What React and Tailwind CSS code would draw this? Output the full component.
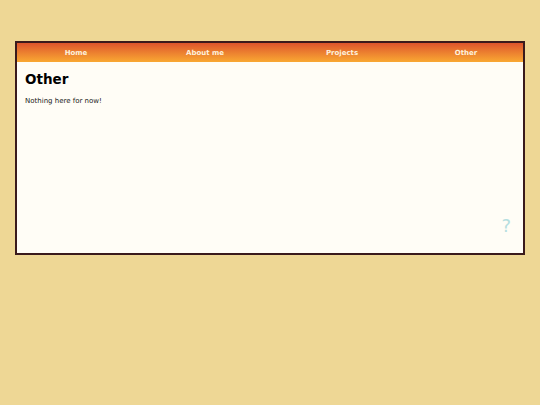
export default function App() {
  const items = [
    ['Home', 'w-[118px]'],
    ['About me', 'w-[140px]'],
    ['Projects', 'w-[134px]'],
    ['Other', 'w-[114px]'],
  ];
  return (
    <div className="min-h-[405px] w-full bg-[#eed795] pt-[41px] px-[15px] pb-[150px]" style={{ fontFamily: '"DejaVu Sans", Verdana, sans-serif' }}>
      <div className="w-[510px] h-[214px] border-2 border-[#3a1a1c] bg-[#fffdf6] flex flex-col">
        <nav className="flex h-[19px] items-center pt-[1px] bg-gradient-to-b from-[#dc532c] to-[#f9a832]">
          {items.map(([t, w]) => (
            <a key={t} className={`${w} shrink-0 text-center text-[7px] font-bold text-[#fdf1dc] leading-none`}>{t}</a>
          ))}
        </nav>
        <div className="relative flex-1 px-[8px] pt-[11px]">
          <h1 className="text-[13.5px] font-bold text-black leading-none">Other</h1>
          <p className="mt-[11px] text-[7px] text-[#222] leading-none">Nothing here for now!</p>
          <span className="absolute right-[12px] bottom-[18px] text-[18px] leading-none text-[#b6dfe0]">?</span>
        </div>
      </div>
    </div>
  );
}
